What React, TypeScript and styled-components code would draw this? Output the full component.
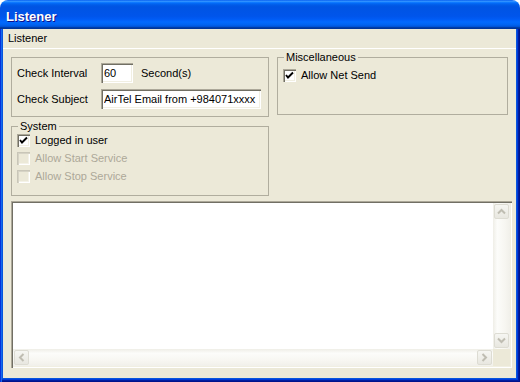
import React from 'react';
import styled, { createGlobalStyle } from 'styled-components';

const FACE = '#ece9d8';
const SUNKEN =
  'inset 1px 1px #aca899, inset 2px 2px #716f64, inset -1px -1px #ffffff, inset -2px -2px #f1efe2';

const GlobalStyle = createGlobalStyle`
  html, body {
    margin: 0;
    padding: 0;
    background: #ffffff;
  }
  body {
    font-family: "Liberation Sans", Arial, sans-serif;
    font-size: 11px;
    color: #000000;
  }
`;

const Window = styled.div`
  width: 520px;
  height: 382px;
  display: flex;
  flex-direction: column;
`;

const TitleBar = styled.div`
  flex: none;
  height: 29px;
  box-sizing: border-box;
  padding: 3px 0 0 6px;
  display: flex;
  align-items: center;
  border-radius: 8px 8px 0 0;
  background: linear-gradient(
    to bottom,
    #0058ee 0%,
    #3593ff 4%,
    #288eff 6%,
    #127dff 8%,
    #036ffc 10%,
    #0262ee 14%,
    #0057e5 20%,
    #0054e3 24%,
    #0055eb 56%,
    #005bf5 66%,
    #026afe 76%,
    #0062ef 86%,
    #0052d6 92%,
    #0040ab 94%,
    #003092 100%
  );
  color: #ffffff;
  font-weight: bold;
  font-size: 13px;
  text-shadow: 1px 1px #0f1089;
`;

const Frame = styled.div`
  flex: 1;
  display: flex;
  flex-direction: column;
  padding: 0 4px 4px 3px;
  background: #0855dd;
  box-shadow: inset 1px 0 #0831d9, inset 2px 0 #166aee, inset -1px -1px #00138c,
    inset -2px -2px #001ea0, inset -3px -3px #003bda;
`;

const MenuBar = styled.div`
  flex: none;
  height: 19px;
  line-height: 19px;
  padding-left: 5px;
  background: ${FACE};
  border-bottom: 1px solid #ffffff;
`;

const Client = styled.div`
  flex: 1;
  display: flex;
  flex-direction: column;
  gap: 5px;
  padding: 8px 4px 10px 8px;
  background: ${FACE};
`;

const TopRow = styled.div`
  flex: none;
  display: flex;
  gap: 8px;
  padding-right: 4px;
`;

const Column = styled.div<{ $width: number }>`
  width: ${({ $width }) => $width}px;
  display: flex;
  flex-direction: column;
  gap: 9px;
`;

const GroupBox = styled.div<{ $height: number; $padTop: number }>`
  position: relative;
  box-sizing: border-box;
  height: ${({ $height }) => $height}px;
  padding: ${({ $padTop }) => $padTop}px 5px 0 5px;
  border: 1px solid #b0ad9e;
  display: flex;
  flex-direction: column;
`;

const Legend = styled.span`
  position: absolute;
  top: -7px;
  left: 6px;
  padding: 0 2px;
  line-height: 12px;
  background: ${FACE};
`;

const FieldStack = styled.div`
  display: flex;
  flex-direction: column;
  gap: 6px;
`;

const FieldRow = styled.div`
  height: 20px;
  display: flex;
  align-items: center;
`;

const FieldLabel = styled.span`
  width: 84px;
`;

const Unit = styled.span`
  margin-left: 8px;
`;

const TextBox = styled.input<{ $width: number }>`
  width: ${({ $width }) => $width}px;
  height: 20px;
  box-sizing: border-box;
  margin: 0;
  padding: 0 2px 0 3px;
  border: none;
  outline: none;
  background: #ffffff;
  box-shadow: ${SUNKEN};
  font-family: "Liberation Sans", Arial, sans-serif;
  font-size: 11px;
  color: #000000;
`;

const CheckRow = styled.div<{ $disabled?: boolean }>`
  height: 18px;
  display: flex;
  align-items: center;
  gap: 5px;
  color: ${({ $disabled }) => ($disabled ? '#aca899' : '#000000')};
`;

const CheckBoxFace = styled.span<{ $disabled?: boolean }>`
  flex: none;
  width: 13px;
  height: 13px;
  display: flex;
  align-items: center;
  justify-content: center;
  background: ${({ $disabled }) => ($disabled ? FACE : '#ffffff')};
  box-shadow: ${({ $disabled }) =>
    $disabled
      ? 'inset 1px 1px #c9c6b8, inset 2px 2px #d6d3c5, inset -1px -1px #ffffff, inset -2px -2px #f4f2e8'
      : SUNKEN};
`;

const Memo = styled.div`
  flex: 1;
  display: flex;
  flex-direction: column;
  padding: 2px;
  background: #ffffff;
  box-shadow: ${SUNKEN};
`;

const MemoBody = styled.div`
  flex: 1;
  display: flex;
`;

const MemoText = styled.div`
  flex: 1;
  background: #ffffff;
`;

const VScroll = styled.div`
  width: 17px;
  display: flex;
  flex-direction: column;
  justify-content: space-between;
  background: linear-gradient(to right, #efeee7 0%, #fcfcfa 25%, #f7f6f1 70%, #f1f0ea 100%);
`;

const HRow = styled.div`
  flex: none;
  height: 17px;
  display: flex;
`;

const HScroll = styled.div`
  flex: 1;
  display: flex;
  justify-content: space-between;
  background: linear-gradient(to bottom, #efeee7 0%, #fcfcfa 25%, #f7f6f1 70%, #f1f0ea 100%);
`;

const Corner = styled.div`
  width: 17px;
  height: 17px;
  background: ${FACE};
`;

const ScrollButton = styled.div`
  width: 15px;
  height: 15px;
  margin: 1px;
  box-sizing: border-box;
  display: flex;
  align-items: center;
  justify-content: center;
  border: 1px solid #dddcd3;
  border-radius: 2px;
  background: linear-gradient(to bottom, #f6f6f2 0%, #e8e7e0 100%);
`;

const Check = () => (
  <svg width='9' height='9' viewBox='0 0 9 9'>
    <polyline points='1,4 3,6.5 8,1.5' fill='none' stroke='#000' strokeWidth='1.9' />
  </svg>
);

const arrows: Record<string, string> = {
  up: '1,6.5 4.5,3 8,6.5',
  down: '1,2.5 4.5,6 8,2.5',
  left: '6.5,1 3,4.5 6.5,8',
  right: '2.5,1 6,4.5 2.5,8'
};

const Arrow = ({ dir }: { dir: string }) => (
  <ScrollButton>
    <svg width='9' height='9' viewBox='0 0 9 9'>
      <polyline points={arrows[dir]} fill='none' stroke='#bfbdb2' strokeWidth='2' />
    </svg>
  </ScrollButton>
);

const CheckOption = ({
  label,
  checked,
  disabled
}: {
  label: string;
  checked?: boolean;
  disabled?: boolean;
}) => (
  <CheckRow $disabled={disabled}>
    <CheckBoxFace $disabled={disabled}>{checked && <Check />}</CheckBoxFace>
    {label}
  </CheckRow>
);

export default function App() {
  return (
    <>
      <GlobalStyle />
      <Window>
        <TitleBar>Listener</TitleBar>
        <Frame>
          <MenuBar>Listener</MenuBar>
          <Client>
            <TopRow>
              <Column $width={258}>
                <GroupBox $height={60} $padTop={5}>
                  <FieldStack>
                    <FieldRow>
                      <FieldLabel>Check Interval</FieldLabel>
                      <TextBox $width={32} defaultValue='60' readOnly />
                      <Unit>Second(s)</Unit>
                    </FieldRow>
                    <FieldRow>
                      <FieldLabel>Check Subject</FieldLabel>
                      <TextBox $width={160} defaultValue='AirTel Email from +984071xxxx' readOnly />
                    </FieldRow>
                  </FieldStack>
                </GroupBox>
                <GroupBox $height={70} $padTop={4}>
                  <Legend>System</Legend>
                  <CheckOption label='Logged in user' checked />
                  <CheckOption label='Allow Start Service' disabled />
                  <CheckOption label='Allow Stop Service' disabled />
                </GroupBox>
              </Column>
              <Column $width={231}>
                <GroupBox $height={58} $padTop={8}>
                  <Legend>Miscellaneous</Legend>
                  <CheckOption label='Allow Net Send' checked />
                </GroupBox>
              </Column>
            </TopRow>
            <Memo>
              <MemoBody>
                <MemoText />
                <VScroll>
                  <Arrow dir='up' />
                  <Arrow dir='down' />
                </VScroll>
              </MemoBody>
              <HRow>
                <HScroll>
                  <Arrow dir='left' />
                  <Arrow dir='right' />
                </HScroll>
                <Corner />
              </HRow>
            </Memo>
          </Client>
        </Frame>
      </Window>
    </>
  );
}
